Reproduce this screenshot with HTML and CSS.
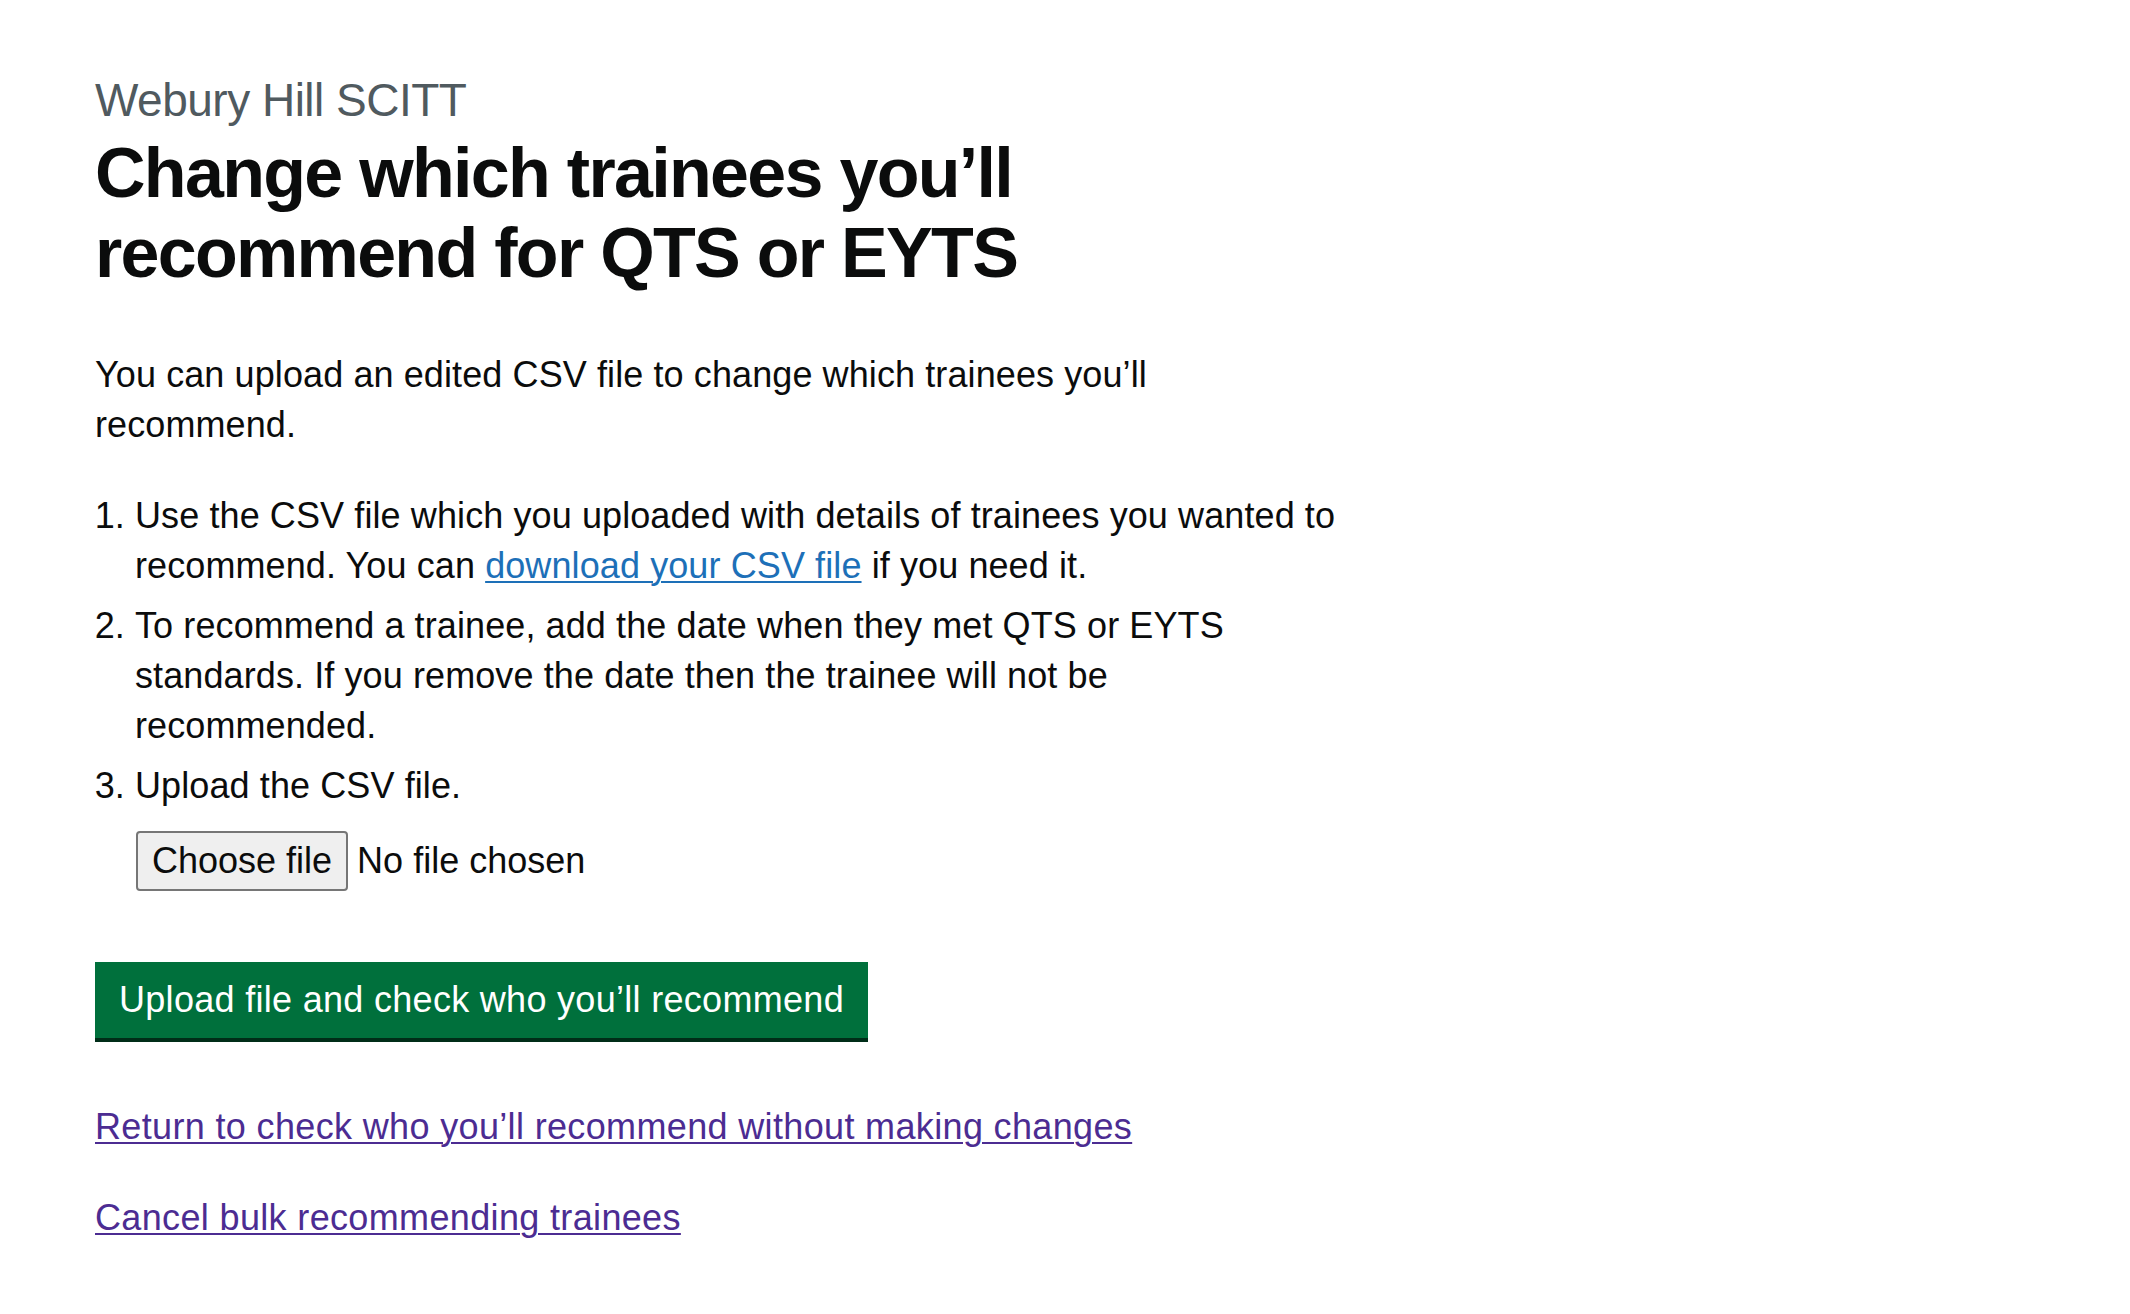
FILE: index.html
```html
<!DOCTYPE html>
<html lang="en">
<head>
<meta charset="utf-8">
<title>Change which trainees you’ll recommend for QTS or EYTS</title>
<link rel="stylesheet" href="styles.css">
</head>
<body>
<main class="main">
  <div class="column">
    <span class="caption">Webury Hill SCITT</span>
    <h1 class="heading">Change which trainees you’ll recommend for QTS or EYTS</h1>
    <p class="body intro">You can upload an edited CSV file to change which trainees you’ll recommend.</p>
    <ol class="steps">
      <li>Use the CSV file which you uploaded with details of trainees you wanted to recommend. You can <a class="link" href="#">download your CSV file</a> if you need it.</li>
      <li>To recommend a trainee, add the date when they met QTS or EYTS standards. If you remove the date then the trainee will not be recommended.</li>
      <li>Upload the CSV file.</li>
    </ol>
    <div class="file-group">
      <label class="file-button" for="csv">Choose file</label>
      <span class="file-status">No file chosen</span>
      <input class="file-input" type="file" id="csv" name="csv">
    </div>
    <div class="button-group">
      <button class="button" type="submit">Upload file and check who you’ll recommend</button>
    </div>
    <p class="body link-row"><a class="link link-visited" href="#">Return to check who you’ll recommend without making changes</a></p>
    <p class="body link-row"><a class="link link-visited" href="#">Cancel bulk recommending trainees</a></p>
  </div>
</main>
</body>
</html>
```

FILE: styles.css
```css
html, body {
  margin: 0;
  padding: 0;
  background: #ffffff;
}

body {
  font-family: "Liberation Sans", Arial, sans-serif;
  color: #0b0c0c;
}

.main {
  padding: 70px 0 60px 95px;
}

.column {
  width: 1248px;
}

.caption {
  display: block;
  font-size: 46px;
  line-height: 60px;
  letter-spacing: -0.5px;
  color: #505a5f;
  margin: 0 0 3px;
}

.heading {
  margin: 0 0 57px;
  font-size: 70px;
  line-height: 80px;
  font-weight: 700;
  letter-spacing: -1.7px;
  color: #0b0c0c;
}

.body {
  margin: 0 0 40px;
  font-size: 36px;
  line-height: 50px;
  letter-spacing: 0.1px;
}

.intro {
  margin-bottom: 41px;
}

.steps {
  margin: 0 0 20px;
  padding: 0 0 0 40px;
  font-size: 36px;
  line-height: 50px;
  letter-spacing: 0.1px;
}

.steps li {
  margin-bottom: 10px;
}

.steps li:last-child {
  margin-bottom: 0;
}

.link {
  color: #1d70b8;
  text-decoration: underline;
  text-decoration-thickness: 2px;
  text-underline-offset: 3px;
}

.link-visited {
  color: #4c2c92;
}

.file-group {
  display: flex;
  align-items: center;
  gap: 9px;
  padding-left: 41px;
  margin-bottom: 71px;
  height: 60px;
}

.file-button {
  box-sizing: border-box;
  height: 60px;
  padding: 0 14px;
  border: 2px solid #767676;
  border-radius: 4px;
  background: #efefef;
  font-size: 36px;
  line-height: 56px;
  color: #0b0c0c;
  cursor: pointer;
}

.file-status {
  font-size: 36px;
  line-height: 56px;
  color: #0b0c0c;
}

.file-input {
  display: none;
}

.button-group {
  margin-bottom: 64px;
}

.button {
  display: inline-block;
  margin: 0;
  padding: 20px 24px 20px;
  border: 0;
  border-radius: 0;
  background: #00703c;
  color: #ffffff;
  font-family: "Liberation Sans", Arial, sans-serif;
  font-size: 36px;
  line-height: 36px;
  letter-spacing: 0.3px;
  box-shadow: 0 4px 0 #002d18;
  cursor: pointer;
}

.link-row {
  margin-bottom: 41px;
  letter-spacing: 0.35px;
}
```
